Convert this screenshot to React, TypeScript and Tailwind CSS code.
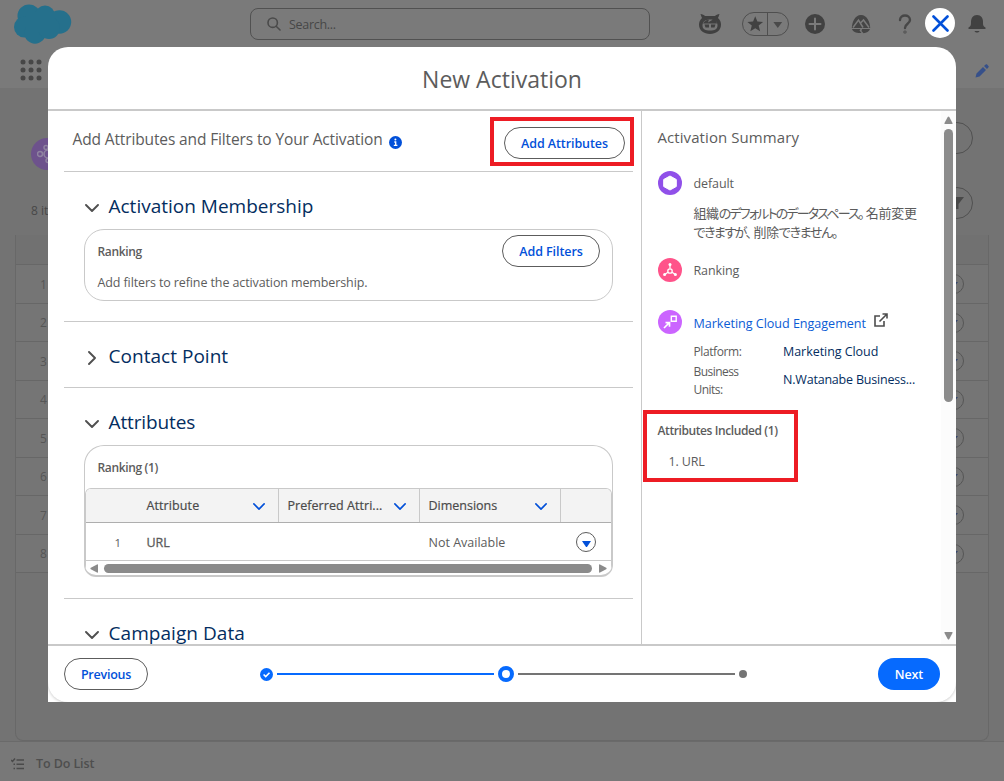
import React from 'react';

const Chevron = ({ className }: { className?: string }) => (
  <svg viewBox="0 0 14 8" className={className} fill="none" stroke="currentColor" strokeWidth="1.9" strokeLinecap="round" strokeLinejoin="round">
    <path d="M1 1l6 6 6-6" />
  </svg>
);

const rows = [1, 2, 3, 4, 5, 6, 7, 8];

function TopBar() {
  return (
    <header className="flex h-[88px] flex-col bg-[#7a7a7a]">
      <div className="flex h-12 items-center">
        <svg width="58" height="40" viewBox="0 0 58 40" className="ml-[14px] shrink-0" fill="#25708c">
          <circle cx="15" cy="12" r="11.500" />
          <circle cx="31" cy="11.500" r="10" />
          <circle cx="45.500" cy="18" r="11.700" />
          <circle cx="10.500" cy="23" r="10.500" />
          <circle cx="21" cy="29" r="10.700" />
          <circle cx="35" cy="24" r="11" />
          <path d="M12 8h28v20H12z" />
        </svg>
        <div className="ml-[178px] flex h-8 w-[400px] items-center rounded-[8px] border border-[#515151] pl-[16px]">
          <svg width="14" height="14" viewBox="0 0 14 14" fill="none" stroke="#4a4a4a" strokeWidth="1.6" strokeLinecap="round">
            <circle cx="5.7" cy="5.7" r="4.7" />
            <path d="M9.2 9.2L13 13" />
          </svg>
          <span className="ml-[8px] mt-[2px] text-[12.5px] tracking-[-0.3px] text-[#474747]">Search...</span>
        </div>
        <svg width="24" height="24" viewBox="0 0 24 24" className="ml-[48px]">
          <path d="M2.500 2c2 0 3.500 1 4.500 2h10c1-1 2.500-2 4.500-2-.5 1.500-1 3-1.500 4 2 2 3 4 3 6.500C23 18.500 18 22 12 22S1 18.500 1 12.500C1 10 2 8 4 6 3.500 5 3 3.500 2.500 2z" fill="#404040" />
          <path d="M4.500 13.500c0-4 3-6 7.500-6s7.500 2 7.500 6-3 5-7.500 5-7.500-1-7.500-5z" fill="#777" />
          <path d="M5 11.500c2-3 4-4 6-4l-1 3 5-3c2 0 4 2 4 4z" fill="#404040" />
          <path d="M6.500 12.500h4.500v3H7.500zM13 12.500h4.500l-1 3H13z" fill="#404040" />
        </svg>
        <div className="ml-[20px] flex h-6 w-[47px] items-center rounded-full border border-[#4f4f4f]">
          <svg width="25" height="20" viewBox="0 0 25 20" fill="#414141">
            <path d="M12.500 2l2.200 5.500 5.800.4-4.500 3.700 1.500 5.900-5-3.200-5 3.200L9 11.600 4.500 7.900l5.800-.4z" />
          </svg>
          <span className="h-[22px] w-px bg-[#4f4f4f]" />
          <svg width="20" height="10" viewBox="0 0 20 10" fill="#4a4a4a"><path d="M5.500 3h9L10 9z" /></svg>
        </div>
        <svg width="20" height="20" viewBox="0 0 20 20" className="ml-[16px]">
          <circle cx="10" cy="10" r="10" fill="#414141" />
          <path d="M10 4.500v11M4.500 10h11" stroke="#7a7a7a" strokeWidth="2" strokeLinecap="round" />
        </svg>
        <svg width="20" height="20" viewBox="0 0 20 20" className="ml-[26px]">
          <path d="M.8 14C1 8 4 1 10 1s9 7 9.200 13z" fill="#454545" />
          <path d="M2 13.500L7.500 6l4.500 7.500M9.500 9L12.500 6l5.500 7.500" fill="none" stroke="#7a7a7a" strokeWidth="1.500" />
          <path d="M1 15h8.500l-1 1.500 2 2.500C6 19.500 2 18 1 15zM11 15h8c-1 2.500-3.500 4-6.500 4.200l-2-2.200z" fill="#454545" />
        </svg>
        <svg width="14" height="20" viewBox="0 0 14 20" className="ml-[27px]" fill="none" stroke="#474747" strokeWidth="2.400" strokeLinecap="round">
          <path d="M2 6c0-6 10-6 10 0 0 4-5 3.500-5 8" />
          <circle cx="7" cy="18" r=".4" />
        </svg>
        <svg width="20" height="20" viewBox="0 0 20 20" className="ml-[55px]" fill="#414141">
          <path d="M10 1c4 0 6 3 6 7 0 3 0 4 2.500 5.500V15h-17v-1.500C4 12 4 11 4 8c0-4 2-7 6-7z" />
          <path d="M7.500 17h5c-1 2-4 2-5 0z" />
        </svg>
      </div>
      <div className="flex h-10 items-center justify-between pl-[20px] pr-[15px]">
        <svg width="22" height="22" viewBox="0 0 22 22" fill="#474747" className="mt-[3px]">
          {[3, 11, 19].map((y) => [3, 11, 19].map((x) => <circle key={x + '-' + y} cx={x} cy={y} r="2.500" />))}
        </svg>
        <svg width="14" height="14" viewBox="0 0 14 14" fill="#36508a" className="mt-[5px]">
          <path d="M.5 13.500l1-4 6.500-6.500 3 3-6.500 6.500zM9 2l1.700-1.500c.5-.4 1-.3 1.400.1l1.300 1.300c.4.4.5 1 .1 1.400L12 5z" />
        </svg>
      </div>
    </header>
  );
}

function PageBehind() {
  return (
    <div className="flex h-full flex-col bg-[#737373]">
      <TopBar />
      <div className="flex h-[147px] justify-between pl-[31px] pr-[31px]">
        <div>
          <div className="mt-[50px] flex h-8 w-8 items-center justify-center rounded-full bg-[#6d528c]">
            <svg width="20" height="20" viewBox="0 0 20 20" fill="none" stroke="#8f83a0" strokeWidth="1.500">
              <circle cx="3" cy="10" r="2.500" />
              <circle cx="11" cy="10" r="4" />
              <circle cx="9" cy="3.500" r="2" />
              <circle cx="11" cy="16.500" r="2" />
            </svg>
          </div>
          <p className="mt-[32px] text-[12px] leading-[18px] text-[#484848]">8 items</p>
        </div>
        <div className="flex flex-col items-end">
          <div className="mt-[34px] h-8 w-[90px] rounded-full border border-[#505050]" />
          <div className="mt-[33px] flex h-8 w-8 items-center justify-center rounded-full border border-[#505050]">
            <svg width="16" height="14" viewBox="0 0 16 14" fill="#484848"><path d="M1 1h14L9.500 8v5h-3V8z" /></svg>
          </div>
        </div>
      </div>
      <div className="mx-[15px] flex h-[506px] flex-col rounded-b-[8px] border border-t-0 border-[#686868]">
        <div className="h-[30px] shrink-0 border-b border-[#676767] bg-[#717171]" />
        {rows.map((n) => (
          <div key={n} className="flex h-[38.5px] shrink-0 items-center justify-between border-b border-[#676767] bg-[#757575] pl-6 pr-6 pt-[1px] text-[12px] text-[#565656]">
            <span className="mt-px">{n}</span>
            <span className="flex h-5 w-5 items-center justify-center rounded-full border border-[#555]">
              <svg width="8" height="5" viewBox="0 0 8 5" fill="#35456b"><path d="M0 0h8L4 5z" /></svg>
            </span>
          </div>
        ))}
      </div>
      <footer className="flex flex-1 items-center border-t border-[#6a6a6a] bg-[#787878] pl-[11px] pt-[5px] text-[12.5px] font-semibold tracking-[-0.1px] text-[#4e4e4e]">
        <svg width="13" height="12" viewBox="0 0 13 12" fill="none" stroke="#4a4a4a" strokeWidth="1.500">
          <path d="M0 2l1.500 1.500L4 .5M5.500 2H13M2.500 6.200H4M5.500 6.200H13M2.500 10.500H4M5.500 10.500H13" />
        </svg>
        <span className="ml-[12px]">To Do List</span>
      </footer>
    </div>
  );
}

const SectionTitle = ({ children, open = true, className }: { children: React.ReactNode; open?: boolean; className: string }) => (
  <div className={'flex shrink-0 items-center pl-[21px] ' + (open ? 'h-[57px] pt-[11px]' : 'h-[65px] pt-[3px]')}>
    <Chevron className={'mt-[3px] h-2 w-[14px] shrink-0 text-[#505050] ' + (open ? '' : '-rotate-90')} />
    <h3 className={'ml-[9.5px] whitespace-nowrap text-[19px] leading-[26px] text-[#032d60] ' + className}>{children}</h3>
  </div>
);

const HeadCell = ({ label, className }: { label: string; className: string }) => (
  <div className={'flex items-center justify-between border-r border-[#c9c9c9] pr-[13px] ' + className}>
    <span className="mt-[2px]">{label}</span>
    <Chevron className="mt-[2px] h-[7px] w-3 text-[#0250d9]" />
  </div>
);

function MainPane() {
  return (
    <div className="flex w-[594px] shrink-0 flex-col overflow-hidden border-r border-[#c9c9c9] pl-4 pr-2">
      <div className="flex h-[61px] shrink-0 items-center justify-between border-b border-[#c9c9c9] pl-[8.5px] pr-2">
        <div className="mb-[3px] flex items-center">
          <h2 className="whitespace-nowrap text-[15.5px] tracking-[-0.13px] text-[#5c5c5c]">Add Attributes and Filters to Your Activation</h2>
          <svg width="13" height="13" viewBox="0 0 13 13" className="ml-[6px] mt-[5px]">
            <circle cx="6.500" cy="6.500" r="6.500" fill="#0250d9" />
            <path d="M5.300 6h1.400v3.500M4.800 9.400h3.600" stroke="#fff" strokeWidth="1.300" fill="none" />
            <circle cx="6.400" cy="3.600" r="1" fill="#fff" />
          </svg>
        </div>
        <button className="mt-1 h-8 w-[121px] whitespace-nowrap rounded-full border border-[#5c5c5c] pt-[2px] text-[12.5px] font-semibold tracking-[-0.08px] text-[#0250d9]">Add Attributes</button>
      </div>

      <section className="flex shrink-0 flex-col border-b border-[#c9c9c9] pb-5">
        <SectionTitle className="tracking-[0px]">Activation Membership</SectionTitle>
        <div className="mx-5 flex h-[72px] justify-between rounded-[20px] border border-[#c9c9c9] pl-[12.5px] pr-3 pt-[5px]">
          <div>
            <p className="mt-[7px] text-[12px] font-semibold leading-[20px] tracking-[-0.35px] text-[#5c5c5c]">Ranking</p>
            <p className="mt-[11px] whitespace-nowrap text-[12.5px] leading-[20px] tracking-[-0.11px] text-[#5c5c5c]">Add filters to refine the activation membership.</p>
          </div>
          <button className="h-8 w-[98px] whitespace-nowrap rounded-full border border-[#5c5c5c] pt-[2px] text-[12.5px] font-semibold tracking-[-0.08px] text-[#0250d9]">Add Filters</button>
        </div>
      </section>

      <section className="shrink-0 border-b border-[#c9c9c9]">
        <SectionTitle open={false} className="tracking-[0.03px]">Contact Point</SectionTitle>
      </section>

      <section className="flex shrink-0 flex-col border-b border-[#c9c9c9] pb-[21px]">
        <SectionTitle className="tracking-[-0.12px]">Attributes</SectionTitle>
        <div className="mx-5 flex h-[132px] flex-col overflow-hidden rounded-b-[12px] rounded-t-[20px] border border-b-2 border-[#c9c9c9]">
          <p className="h-[42px] shrink-0 pl-[12.5px] pt-3 text-[12px] font-semibold leading-[20px] tracking-[-0.35px] text-[#5c5c5c]">Ranking (1)</p>
          <div className="flex flex-1 flex-col rounded-t-[6px] border-x border-t border-[#c9c9c9]">
            <div className="flex h-[34px] shrink-0 rounded-t-[5px] border-b border-[#aeaeae] bg-[#f3f3f3] text-[12.5px] text-[#4a4a4a] [-webkit-text-stroke:0.2px]">
              <HeadCell label="Attribute" className="w-[193px] pl-[60.5px] tracking-[0.1px]" />
              <HeadCell label="Preferred Attri..." className="w-[141px] pl-[8.5px] tracking-[0.05px]" />
              <HeadCell label="Dimensions" className="w-[141px] pl-[8.5px]" />
            </div>
            <div className="flex h-[38px] shrink-0 items-center border-b border-[#c9c9c9] pt-px text-[12.5px] text-[#5c5c5c]">
              <span className="mt-[2px] w-[60.5px] pl-[28.5px] text-[11.5px]">1</span>
              <span className="mt-[2px] w-[282px] [-webkit-text-stroke:0.3px]">URL</span>
              <span className="mt-[2px] w-[147.5px] whitespace-nowrap">Not Available</span>
              <span className="flex h-5 w-5 items-center justify-center rounded-full border border-[#5c5c5c]">
                <svg width="9" height="6" viewBox="0 0 9 6" className="mt-[3px]" fill="#0250d9"><path d="M0 0h9L5.300 5.400a1 1 0 01-1.600 0z" /></svg>
              </span>
            </div>
            <div className="flex h-[15px] shrink-0 items-center px-[4px]">
              <svg width="8" height="9" viewBox="0 0 8 9" fill="#8b8b8b"><path d="M7 0.500q1-.5 1 .5v7q0 1-1 .5L.8 5.200a.9.9 0 010-1.400z" /></svg>
              <div className="ml-[6px] mr-[7px] h-[9px] flex-1 rounded-full bg-[#8b8b8b]" />
              <svg width="8" height="9" viewBox="0 0 8 9" fill="#8b8b8b"><path d="M1 .5Q0 0 0 1v7q0 1 1 .5l6.200-3.300a.9.9 0 000-1.400z" /></svg>
            </div>
          </div>
        </div>
      </section>
      <SectionTitle className="tracking-[0.05px]">Campaign Data</SectionTitle>
    </div>
  );
}

function Summary() {
  return (
    <aside className="flex flex-1 text-[12.5px] text-[#5c5c5c]">
      <div className="flex-1 pl-4">
        <h2 className="-ml-[0.5px] mt-[14px] text-[15px] leading-6 tracking-[0.08px]">Activation Summary</h2>
        <div className="mt-[22px] flex items-start">
          <svg width="24" height="24" viewBox="0 0 24 24">
            <circle cx="12" cy="12" r="12" fill="#9050e9" />
            <path d="M12 5l6.300 3.500v7L12 19l-6.300-3.500v-7z" fill="#fff" stroke="#fff" strokeLinejoin="round" />
          </svg>
          <div className="ml-[11.5px]">
            <p className="pt-px leading-6 tracking-[-0.1px]">default</p>
            <p className="mt-[7px] w-[230px] whitespace-nowrap font-['Noto_Sans_CJK_JP',sans-serif] text-[13px] leading-[19px] [font-feature-settings:'palt']">
              <span className="tracking-[-0.4px]">組織</span><span className="tracking-[-1.8px]">のデフォルトのデータスペース。</span><span className="ml-[3px] tracking-[-0.3px]">名前変更</span><br />
              <span className="tracking-[-1.5px]">できますが、</span><span className="ml-[3px] tracking-[-0.4px]">削除</span><span className="tracking-[-1.3px]">できません。</span>
            </p>
          </div>
        </div>
        <div className="mt-[17px] flex items-center">
          <svg width="24" height="24" viewBox="0 0 24 24" fill="none" stroke="#fff" strokeWidth="1.300">
            <circle cx="12" cy="12" r="12" fill="#ff538a" stroke="none" />
            <circle cx="12" cy="13" r="2.200" />
            <path d="M12 10.500V7M10 14.300l-3 2M14 14.300l3 2" />
            <circle cx="12" cy="6.500" r="1.500" fill="#fff" stroke="none" />
            <circle cx="6.600" cy="16.600" r="1.500" fill="#fff" stroke="none" />
            <circle cx="17.400" cy="16.600" r="1.500" fill="#fff" stroke="none" />
          </svg>
          <span className="ml-[11.5px] mt-[2px] tracking-[-0.1px]">Ranking</span>
        </div>
        <div className="mt-[28px] flex items-center">
          <svg width="24" height="24" viewBox="0 0 24 24" fill="none" stroke="#fff" strokeWidth="1.700">
            <circle cx="12" cy="12" r="12" fill="#cb65ff" stroke="none" />
            <path d="M13.300 6.300h4.900v4.900h-4.900z" strokeWidth="1.400" />
            <path d="M6 18l5-5M7.500 12.700h4v4" />
          </svg>
          <a className="ml-[11.5px] mt-[3px] whitespace-nowrap text-[12.6px] leading-[18px] tracking-[-0.04px] text-[#0b5cd5]">Marketing Cloud Engagement</a>
          <svg width="14" height="14" viewBox="0 0 14 14" className="mb-1 ml-[8px]" fill="none" stroke="#4d4d4d" strokeWidth="1.600">
            <path d="M6 3H1v10h9V8M8.500 1H13v4.500M13 1L5.500 8.500" />
          </svg>
        </div>
        <div className="ml-[35.5px] mt-[9px] grid grid-cols-[89.5px_1fr] text-[12px] leading-[18.500px]">
          <span className="tracking-[-0.4px]">Platform:</span>
          <span className="text-[12.5px] tracking-[-0.05px] text-[#032d60]">Marketing Cloud</span>
          <span className="pt-px leading-[18px] tracking-[-0.55px]">Business<br />Units:</span>
          <span className="mt-[1px] self-center whitespace-nowrap text-[12.5px] tracking-[-0.2px] text-[#032d60]">N.Watanabe Business...</span>
        </div>
        <h4 className="-ml-[0.5px] mt-[22px] text-[12px] font-semibold leading-5 tracking-[-0.4px]">Attributes Included (1)</h4>
        <p className="ml-[10.5px] mt-[11px] leading-5 tracking-[-0.15px]">1. URL</p>
      </div>
      <div className="flex w-[15px] flex-col items-center bg-[#fcfcfc] pb-[4px] pt-[5px]">
        <svg width="9" height="8" viewBox="0 0 9 8" fill="#8b8b8b"><path d="M.5 7Q0 8 1 8h7q1 0 .5-1L5.300 1a1 1 0 00-1.600 0z" /></svg>
        <div className="mt-[5px] h-[273px] w-[9px] rounded-full bg-[#8b8b8b]" />
        <svg width="9" height="8" viewBox="0 0 9 8" className="mt-auto" fill="#8b8b8b"><path d="M.5 1Q0 0 1 0h7q1 0 .5 1L5.300 7a1 1 0 01-1.600 0z" /></svg>
      </div>
    </aside>
  );
}

function Modal() {
  return (
    <div role="dialog" className="absolute left-12 top-[47px] flex h-[655px] w-[908px] flex-col rounded-t-[20px] bg-white">
      <div className="flex h-16 shrink-0 items-center justify-center border-b-2 border-[#c9c9c9] pt-[2px]">
        <h1 className="whitespace-nowrap text-[23px] text-[#5c5c5c]">New Activation</h1>
      </div>
      <div className="flex h-[533px] shrink-0">
        <MainPane />
        <Summary />
      </div>
      <div className="flex flex-1 items-center rounded-b-[20px] border-t-2 border-[#c9c9c9] px-4 shadow-[0_1px_3px_rgba(0,0,0,0.2)] [clip-path:inset(0)]">
        <button className="h-8 w-[84px] rounded-full border border-[#5c5c5c] pt-[2px] text-[12.5px] font-semibold tracking-[-0.25px] text-[#0250d9]">Previous</button>
        <div className="ml-[111.5px] flex w-[487.5px] items-center">
          <svg width="13" height="13" viewBox="0 0 13 13">
            <circle cx="6.500" cy="6.500" r="6.500" fill="#066afe" />
            <path d="M3.600 6.500l2.100 2.100 3.800-3.900" stroke="#fff" strokeWidth="1.600" fill="none" />
          </svg>
          <div className="ml-[4.5px] h-[2px] w-[217px] bg-[#066afe]" />
          <div className="mx-1 h-4 w-4 rounded-full border-4 border-[#066afe]" />
          <div className="mr-1 h-[2px] w-[217px] bg-[#747474]" />
          <div className="h-2 w-2 rounded-full bg-[#747474]" />
        </div>
        <button className="ml-auto h-8 w-[62px] rounded-full bg-[#066afe] pt-[2px] text-[12.5px] font-semibold tracking-[-0.1px] text-white">Next</button>
      </div>
    </div>
  );
}

export default function App() {
  return (
    <div className="relative h-[781px] w-[1004px] overflow-hidden font-['Open_Sans','Noto_Sans_CJK_JP',sans-serif]">
      <PageBehind />
      <Modal />
      <button aria-label="Close" className="absolute left-[925px] top-2 flex h-[30px] w-[30px] items-center justify-center rounded-full bg-white">
        <svg width="17" height="17" viewBox="0 0 17 17" stroke="#0250d9" strokeWidth="2.600" strokeLinecap="round"><path d="M1.500 1.500l14 14M15.500 1.500l-14 14" /></svg>
      </button>
      <div className="pointer-events-none absolute left-[490px] top-[117px] h-[49px] w-[144px] border-4 border-[#ed1c24]" />
      <div className="pointer-events-none absolute left-[643px] top-[410px] h-[72px] w-[155px] border-4 border-[#ed1c24]" />
    </div>
  );
}
